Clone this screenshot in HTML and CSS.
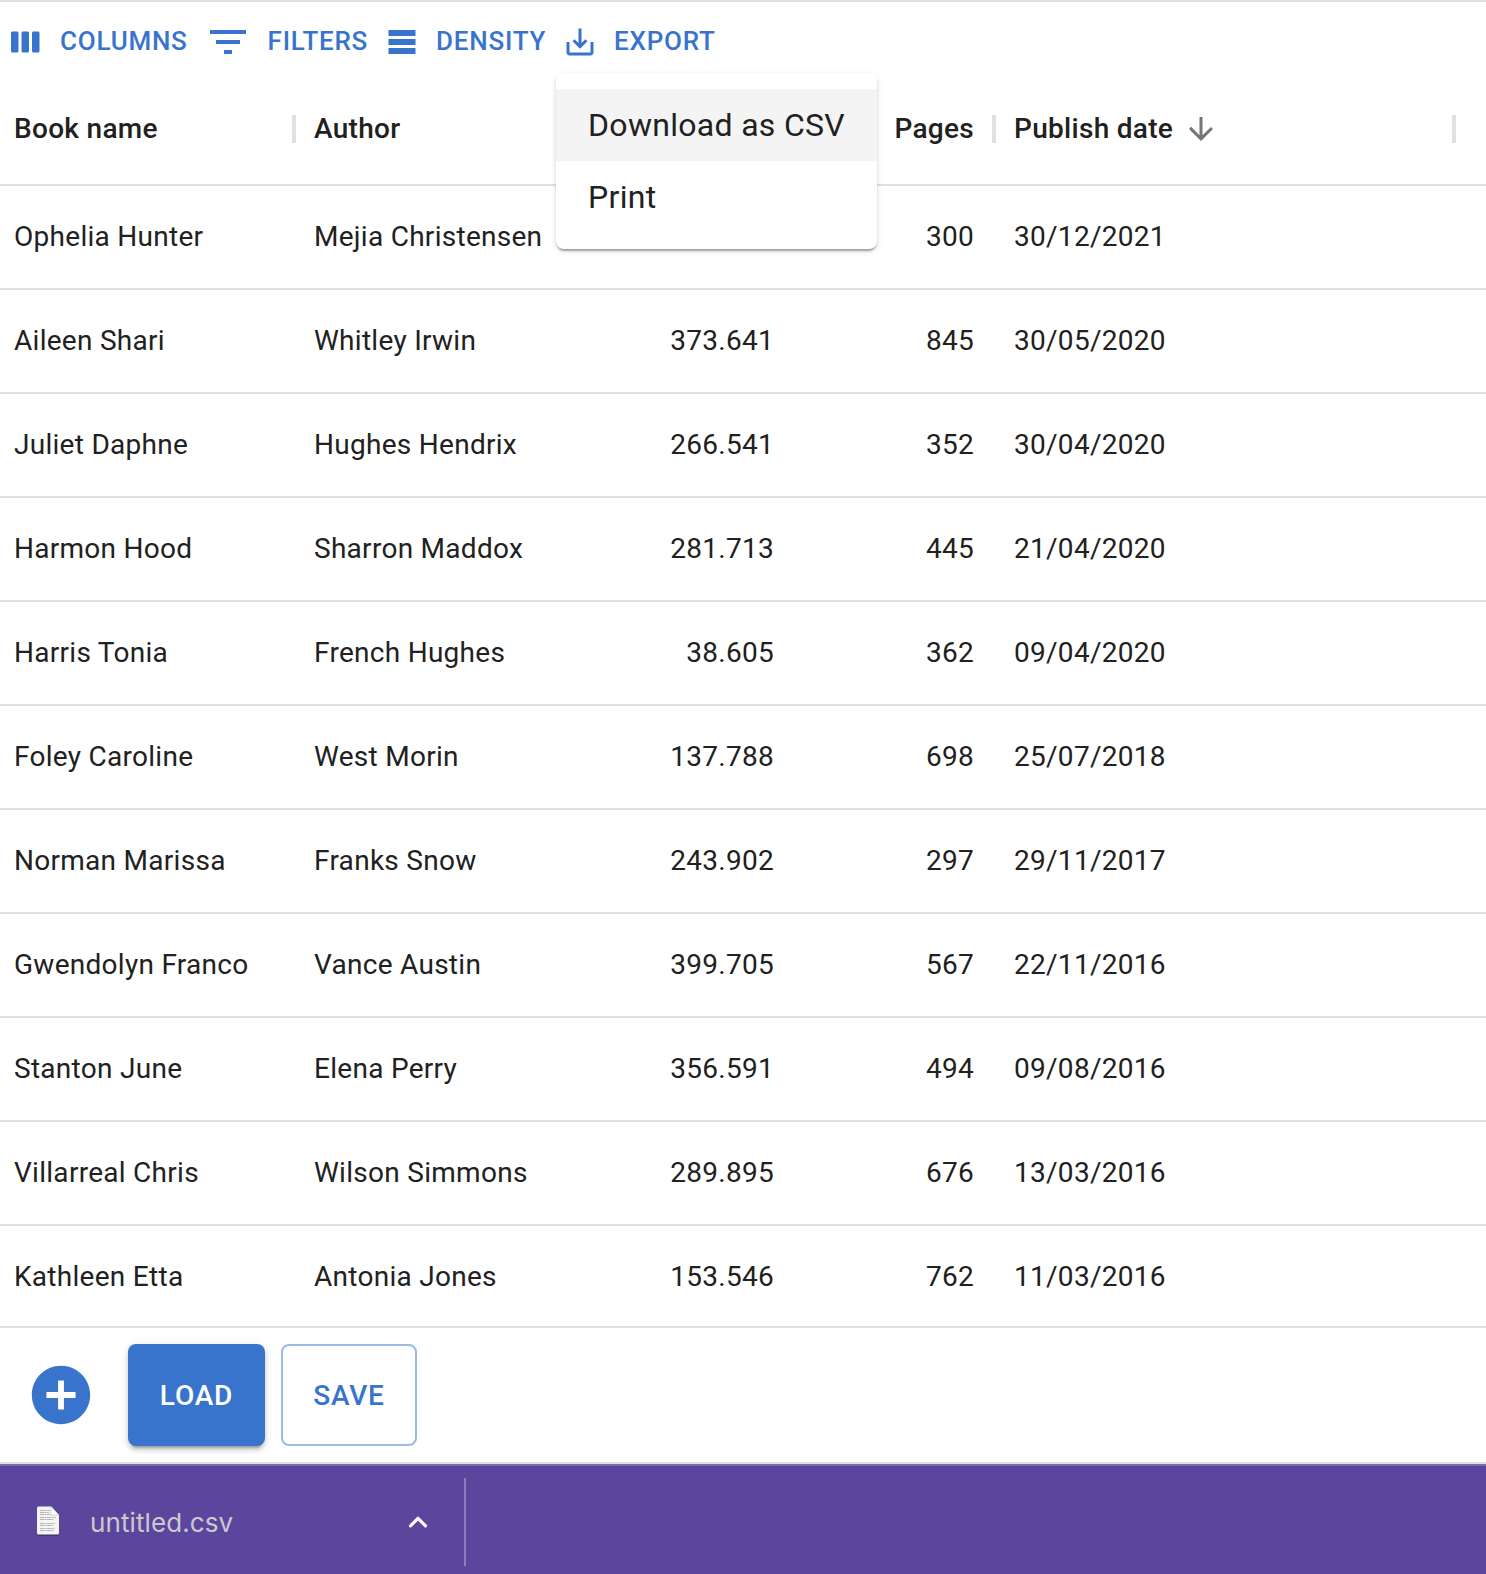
FILE: index.html
```html
<!DOCTYPE html>
<html lang="en">
<head>
<meta charset="utf-8">
<title>Books</title>
<link rel="stylesheet" href="styles.css">
</head>
<body>
<main class="grid">
  <div class="toolbar">
    <button class="tool"><svg class="icon" viewBox="0 0 24 24"><path d="M6 5H3c-.55 0-1 .45-1 1v12c0 .55.45 1 1 1h3c.55 0 1-.45 1-1V6c0-.55-.45-1-1-1zm14 0h-3c-.55 0-1 .45-1 1v12c0 .55.45 1 1 1h3c.55 0 1-.45 1-1V6c0-.55-.45-1-1-1zm-7 0h-3c-.55 0-1 .45-1 1v12c0 .55.45 1 1 1h3c.55 0 1-.45 1-1V6c0-.55-.45-1-1-1z"/></svg>Columns</button>
    <button class="tool"><svg class="icon icon-large" viewBox="0 0 24 24"><path d="M10 18h4v-2h-4v2zM3 6v2h18V6H3zm3 7h12v-2H6v2z"/></svg>Filters</button>
    <button class="tool"><svg class="icon" viewBox="0 0 24 24"><path d="M21 8H3V4h18v4zm0 2H3v4h18v-4zm0 6H3v4h18v-4z"/></svg>Density</button>
    <div class="export">
      <button class="tool"><svg class="icon" viewBox="0 0 24 24"><path d="M19 12v7H5v-7H3v7c0 1.1.9 2 2 2h14c1.1 0 2-.9 2-2v-7h-2zm-6 .67l2.59-2.58L17 11.5l-5 5-5-5 1.41-1.41L11 12.67V3h2z"/></svg>Export</button>
      <div class="menu">
        <div class="menu-item active">Download as CSV</div>
        <div class="menu-item">Print</div>
      </div>
    </div>
  </div>
  <div class="row head">
    <div class="cell sep">Book name</div>
    <div class="cell sep">Author</div>
    <div class="cell num sep"></div>
    <div class="cell num sep">Pages</div>
    <div class="cell sep">Publish date<svg class="sort" viewBox="0 0 24 24"><path d="M20 12l-1.41-1.41L13 16.17V4h-2v12.17l-5.58-5.59L4 12l8 8 8-8z"/></svg></div>
  </div>
  <div class="body">
    <div class="row"><div class="cell">Ophelia Hunter</div><div class="cell">Mejia Christensen</div><div class="cell num"></div><div class="cell num">300</div><div class="cell">30/12/2021</div></div>
    <div class="row"><div class="cell">Aileen Shari</div><div class="cell">Whitley Irwin</div><div class="cell num">373.641</div><div class="cell num">845</div><div class="cell">30/05/2020</div></div>
    <div class="row"><div class="cell">Juliet Daphne</div><div class="cell">Hughes Hendrix</div><div class="cell num">266.541</div><div class="cell num">352</div><div class="cell">30/04/2020</div></div>
    <div class="row"><div class="cell">Harmon Hood</div><div class="cell">Sharron Maddox</div><div class="cell num">281.713</div><div class="cell num">445</div><div class="cell">21/04/2020</div></div>
    <div class="row"><div class="cell">Harris Tonia</div><div class="cell">French Hughes</div><div class="cell num">38.605</div><div class="cell num">362</div><div class="cell">09/04/2020</div></div>
    <div class="row"><div class="cell">Foley Caroline</div><div class="cell">West Morin</div><div class="cell num">137.788</div><div class="cell num">698</div><div class="cell">25/07/2018</div></div>
    <div class="row"><div class="cell">Norman Marissa</div><div class="cell">Franks Snow</div><div class="cell num">243.902</div><div class="cell num">297</div><div class="cell">29/11/2017</div></div>
    <div class="row"><div class="cell">Gwendolyn Franco</div><div class="cell">Vance Austin</div><div class="cell num">399.705</div><div class="cell num">567</div><div class="cell">22/11/2016</div></div>
    <div class="row"><div class="cell">Stanton June</div><div class="cell">Elena Perry</div><div class="cell num">356.591</div><div class="cell num">494</div><div class="cell">09/08/2016</div></div>
    <div class="row"><div class="cell">Villarreal Chris</div><div class="cell">Wilson Simmons</div><div class="cell num">289.895</div><div class="cell num">676</div><div class="cell">13/03/2016</div></div>
    <div class="row"><div class="cell">Kathleen Etta</div><div class="cell">Antonia Jones</div><div class="cell num">153.546</div><div class="cell num">762</div><div class="cell">11/03/2016</div></div>
  </div>
  <div class="footer">
    <svg class="add" viewBox="0 0 24 24"><path d="M12 2C6.48 2 2 6.48 2 12s4.48 10 10 10 10-4.48 10-10S17.52 2 12 2zm5 11h-4v4h-2v-4H7v-2h4V7h2v4h4v2z"/></svg>
    <button class="btn btn-load">Load</button>
    <button class="btn btn-save">Save</button>
  </div>
</main>
<div class="downloads">
  <div class="download">
    <svg class="file" viewBox="0 0 24 30">
      <path class="file-shadow" d="M1 3a2 2 0 0 1 2-2h12l8 8v19a2 2 0 0 1-2 2H3a2 2 0 0 1-2-2z"/>
      <path class="file-page" d="M1 2a1.500 1.500 0 0 1 1.500-1.500H15L23 9v18a1.500 1.500 0 0 1-1.500 1.500h-19A1.500 1.500 0 0 1 1 27z"/>
      <path class="file-text" d="M4 4.500h10M4 6.500h9M4 8.500h10M4 11.500h16M4 13.500h14M4 17.500h15M4 19.500h13M4 22.500h15M4 24.500h14"/>
      <path class="file-fold" d="M15 .5V9h8z"/>
    </svg>
    <span class="file-name">untitled.csv</span>
    <svg class="chevron" viewBox="0 0 20 12"><path d="M2.500 9.800L10 2.300l7.500 7.500"/></svg>
  </div>
</div>
</body>
</html>
```
FILE: styles.css
```css
* { box-sizing: border-box; }

body {
  margin: 0;
  height: 1574px;
  overflow: hidden;
  display: flex;
  flex-direction: column;
  background: #fff;
  color: #212121;
  font: 400 28px/40px Roboto, sans-serif;
  letter-spacing: 0.28px;
}

button { font: inherit; color: inherit; cursor: pointer; }

.grid {
  height: 1464px;
  flex: none;
  display: flex;
  flex-direction: column;
  border-top: 2px solid #e0e0e0;
  border-bottom: 2px solid #e0e0e0;
}

.toolbar {
  flex: none;
  height: 72px;
  padding: 8px 2px 0;
  display: flex;
  align-items: flex-start;
}

.tool {
  height: 62px;
  padding: 0 10px;
  display: flex;
  align-items: center;
  border: 0;
  background: none;
  color: #3874cb;
  font-size: 26px;
  font-weight: 500;
  letter-spacing: 0.75px;
  text-transform: uppercase;
}

.icon {
  width: 36px;
  height: 36px;
  margin: 2px 16px 0 -4px;
  fill: currentColor;
}
.icon-large { width: 48px; height: 48px; }

.export { position: relative; }

.menu {
  position: absolute;
  z-index: 2;
  top: 63px;
  left: 0;
  width: 321px;
  padding: 16px 0;
  border-radius: 8px;
  background: #fff;
  box-shadow: 0 4px 2px -2px rgba(0,0,0,.2), 0 2px 2px rgba(0,0,0,.14), 0 2px 6px rgba(0,0,0,.12);
}

.menu-item {
  height: 72px;
  padding: 0 32px;
  font-size: 32px;
  line-height: 72px;
  letter-spacing: 0.3px;
  white-space: nowrap;
}
.menu-item.active { background: #f4f4f4; }

.row {
  height: 104px;
  display: grid;
  grid-template-columns: 294px 300px 200px 200px 460px;
  border-bottom: 2px solid #e0e0e0;
}

.head {
  flex: none;
  height: 112px;
  font-weight: 500;
  letter-spacing: 0.3px;
}

.cell {
  position: relative;
  display: flex;
  align-items: center;
  padding: 0 20px;
  white-space: nowrap;
}
.cell:first-child { padding-left: 14px; }
.num { justify-content: flex-end; }

.sep::after {
  content: "";
  position: absolute;
  right: -2px;
  top: 41px;
  width: 4px;
  height: 28px;
  background: #e0e0e0;
}

.sort {
  width: 36px;
  height: 36px;
  margin-left: 10px;
  fill: #757575;
}

.body { flex: 1; min-height: 0; overflow: hidden; }

.footer {
  flex: none;
  height: 136px;
  padding-left: 26px;
  display: flex;
  align-items: center;
  border-top: 2px solid #e0e0e0;
}

.add {
  width: 70px;
  height: 70px;
  margin-right: 32px;
  fill: #3874cb;
}

.btn {
  height: 102px;
  padding: 2px 0 0;
  border: 0;
  border-radius: 8px;
  font-weight: 500;
  letter-spacing: 0.8px;
  text-transform: uppercase;
}

.btn-load {
  width: 137px;
  margin-right: 16px;
  background: #3874cb;
  color: #fff;
  box-shadow: 0 6px 2px -4px rgba(0,0,0,.2), 0 4px 4px rgba(0,0,0,.14), 0 2px 10px rgba(0,0,0,.12);
}

.btn-save {
  width: 136px;
  border: 2px solid #9bb9e5;
  background: #fff;
  color: #3874cb;
}

.downloads {
  flex: 1;
  padding: 12px 0 8px;
  border-top: 2px solid #7d6bb1;
  background: #5b469e;
}

.download {
  width: 466px;
  height: 88px;
  padding: 0 36px;
  display: flex;
  align-items: center;
  border-right: 2px solid #8c7dba;
}

.file { width: 24px; height: 30px; margin-top: -3px; }
.file-shadow { fill: #00000040; }
.file-page { fill: #f4f4f4; }
.file-text { fill: none; stroke: #b4b4b4; stroke-width: 1.1; stroke-dasharray: 4 .5 2 .6; }
.file-fold { fill: #fff; stroke: #bbb; stroke-width: .6; }

.file-name {
  margin-left: 30px;
  padding-top: 2px;
  flex: 1;
  color: #ccc9ce;
  font-family: Inter, sans-serif;
  font-size: 26px;
  letter-spacing: 0.1px;
}

.chevron {
  width: 20px;
  height: 12px;
  fill: none;
  stroke: #fff;
  stroke-width: 3.2;
  stroke-linecap: round;
  stroke-linejoin: round;
}
```
